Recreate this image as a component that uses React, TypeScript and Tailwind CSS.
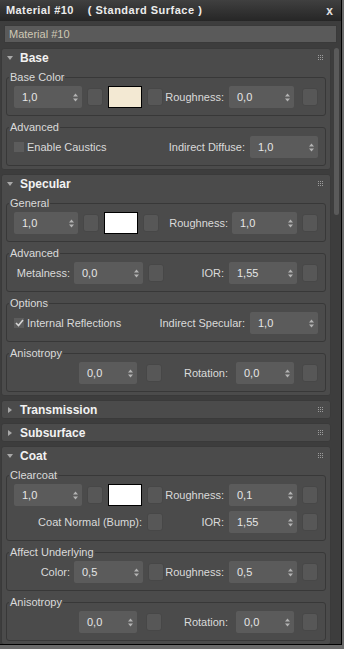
import React from "react";

const Spin = ({ v, className }: { v: string; className: string }) => (
  <div
    className={`flex h-[22px] shrink-0 items-center justify-between rounded-[2px] bg-[#5b5b5b] pl-[8px] pr-[4px] text-[#e6e6e6] ${className}`}
  >
    <span>{v}</span>
    <svg width="5" height="9" viewBox="0 0 5 9">
      <path d="M0 3.5L2.5 0.5L5 3.5Z M0 5.5L5 5.5L2.5 8.5Z" fill="#b4b4b4" />
    </svg>
  </div>
);

const Sq = ({ className = "" }: { className?: string }) => (
  <div
    className={`h-[18px] w-[16px] shrink-0 rounded-[3px] border border-[#474747] bg-[#575757] ${className}`}
  />
);

const Swatch = ({ color }: { color: string }) => (
  <div
    className="ml-[5px] h-[22px] w-[34px] shrink-0 border border-black"
    style={{ backgroundColor: color }}
  />
);

const Check = ({ on }: { on?: boolean }) => (
  <div className="ml-[7px] flex h-[10px] w-[10px] shrink-0 items-center justify-center bg-[#5c5c5c]">
    {on && (
      <svg width="9" height="8" viewBox="0 0 9 8">
        <path d="M1 4L3.5 6.5L8 1" stroke="#d6d6d6" strokeWidth="1.6" fill="none" />
      </svg>
    )}
  </div>
);

const Row = ({ children }: { children: React.ReactNode }) => (
  <div className="flex h-[22px] items-center">{children}</div>
);

const Group = ({
  label,
  children,
}: {
  label: string;
  children: React.ReactNode;
}) => (
  <fieldset className="rounded-[3px] border border-[#383838]">
    <legend className="ml-[2px] px-[1px] text-[11px] leading-[14px] text-[#dadada]">
      {label}
    </legend>
    <div className="flex flex-col gap-[5px] pb-[7px] pt-[2px]">{children}</div>
  </fieldset>
);

const Grip = () => (
  <svg className="ml-auto mr-[7px]" width="5" height="5" viewBox="0 0 5 5">
    {[0, 2, 4].map((y) =>
      [0, 2, 4].map((x) => (
        <rect key={`${x}-${y}`} x={x} y={y} width="1" height="1" fill="#9c9c9c" />
      )),
    )}
  </svg>
);

const Rollout = ({
  title,
  open,
  children,
}: {
  title: string;
  open?: boolean;
  children?: React.ReactNode;
}) => (
  <div className="rounded-[3px] border border-[#3a3a3a] bg-[#4b4b4b]">
    <div className="flex h-[17px] items-center pl-[5px]">
      <div className="flex w-[6px] justify-center">
        {open ? (
          <svg width="6" height="4" viewBox="0 0 6 4">
            <path d="M0 0L6 0L3 4Z" fill="#a8a8a8" />
          </svg>
        ) : (
          <svg width="4" height="6" viewBox="0 0 4 6">
            <path d="M0 0L4 3L0 6Z" fill="#a8a8a8" />
          </svg>
        )}
      </div>
      <span className="ml-[7px] text-[12px] font-bold text-[#f2f2f2]">{title}</span>
      <Grip />
    </div>
    {open && (
      <div className="flex flex-col gap-[4px] px-[4px] pb-[3px] pt-[4px]">{children}</div>
    )}
  </div>
);

const Anisotropy = () => (
  <Group label="Anisotropy">
    <Row>
      <Spin v="0,0" className="ml-[72px] w-[58px]" />
      <Sq className="ml-[9px]" />
      <span className="w-[74px] shrink-0 pr-[8px] text-right">Rotation:</span>
      <Spin v="0,0" className="w-[58px]" />
      <Sq className="ml-[8px]" />
    </Row>
  </Group>
);

export default function App() {
  return (
    <div className="h-[649px] w-[344px] bg-[#6a6a6a] font-['Liberation_Sans',Arial,sans-serif] text-[11px] text-[#dadada]">
      <div className="flex h-[645px] w-[342px] flex-col overflow-hidden border-b border-r border-black bg-[#3d3d3d]">
        <div className="flex h-[21px] shrink-0 items-center bg-gradient-to-b from-[#404040] to-[#262626] pl-[6px] pr-[8px]">
          <span className="text-[11px] font-bold tracking-[0.4px] text-[#ececec]">
            Material #10
          </span>
          <span className="ml-[14px] text-[11px] font-bold tracking-[0.5px] text-[#ececec]">
            ( Standard Surface )
          </span>
          <span className="ml-auto text-[12px] font-bold text-[#e0e0e0]">x</span>
        </div>
        <div className="mx-[4px] mt-[4px] flex h-[18px] shrink-0 items-center border border-[#3a3a3a] bg-[#5a5a5a] pl-[4px] text-[#cfc8b4]">
          Material #10
        </div>
        <div className="mt-[5px] flex min-h-0 flex-1">
          <div className="ml-[1px] flex w-[330px] shrink-0 flex-col gap-[4px]">
            <Rollout title="Base" open>
              <Group label="Base Color">
                <Row>
                  <Spin v="1,0" className="ml-[7px] w-[68px]" />
                  <Sq className="ml-[5px]" />
                  <Swatch color="#f3e9d3" />
                  <Sq className="ml-[5px]" />
                  <span className="w-[66px] shrink-0 pr-[5px] text-right">Roughness:</span>
                  <Spin v="0,0" className="w-[65px]" />
                  <Sq className="ml-[8px]" />
                </Row>
              </Group>
              <Group label="Advanced">
                <Row>
                  <Check />
                  <span className="ml-[3px]">Enable Caustics</span>
                  <span className="ml-auto mr-[5px]">Indirect Diffuse:</span>
                  <Spin v="1,0" className="mr-[7px] w-[68px]" />
                </Row>
              </Group>
            </Rollout>

            <Rollout title="Specular" open>
              <Group label="General">
                <Row>
                  <Spin v="1,0" className="ml-[7px] w-[64px]" />
                  <Sq className="ml-[5px]" />
                  <Swatch color="#ffffff" />
                  <Sq className="ml-[5px]" />
                  <span className="w-[73px] shrink-0 pr-[4px] text-right">Roughness:</span>
                  <Spin v="1,0" className="w-[65px]" />
                  <Sq className="ml-[5px]" />
                </Row>
              </Group>
              <Group label="Advanced">
                <Row>
                  <span className="w-[67px] shrink-0 pr-[4px] text-right">Metalness:</span>
                  <Spin v="0,0" className="w-[69px]" />
                  <Sq className="ml-[5px]" />
                  <span className="w-[65px] shrink-0 pr-[5px] text-right">IOR:</span>
                  <Spin v="1,55" className="w-[68px]" />
                  <Sq className="ml-[5px]" />
                </Row>
              </Group>
              <Group label="Options">
                <Row>
                  <Check on />
                  <span className="ml-[3px]">Internal Reflections</span>
                  <span className="ml-auto mr-[5px]">Indirect Specular:</span>
                  <Spin v="1,0" className="mr-[7px] w-[68px]" />
                </Row>
              </Group>
              <Anisotropy />
            </Rollout>

            <Rollout title="Transmission" />
            <Rollout title="Subsurface" />

            <Rollout title="Coat" open>
              <Group label="Clearcoat">
                <Row>
                  <Spin v="1,0" className="ml-[7px] w-[68px]" />
                  <Sq className="ml-[5px]" />
                  <Swatch color="#ffffff" />
                  <Sq className="ml-[5px]" />
                  <span className="w-[66px] shrink-0 pr-[5px] text-right">Roughness:</span>
                  <Spin v="0,1" className="w-[68px]" />
                  <Sq className="ml-[5px]" />
                </Row>
                <Row>
                  <span className="w-[135px] shrink-0 text-right">Coat Normal (Bump):</span>
                  <Sq className="ml-[5px]" />
                  <span className="w-[66px] shrink-0 pr-[5px] text-right">IOR:</span>
                  <Spin v="1,55" className="w-[68px]" />
                  <Sq className="ml-[5px]" />
                </Row>
              </Group>
              <Group label="Affect Underlying">
                <Row>
                  <span className="w-[67px] shrink-0 pr-[4px] text-right">Color:</span>
                  <Spin v="0,5" className="w-[69px]" />
                  <Sq className="ml-[5px]" />
                  <span className="w-[65px] shrink-0 pr-[5px] text-right">Roughness:</span>
                  <Spin v="0,5" className="w-[68px]" />
                  <Sq className="ml-[5px]" />
                </Row>
              </Group>
              <Anisotropy />
            </Rollout>
          </div>
          <div className="ml-[3px] w-[5px] shrink-0">
            <div className="h-[167px] rounded-[3px] bg-[#5a5a5a]" />
          </div>
        </div>
      </div>
    </div>
  );
}
